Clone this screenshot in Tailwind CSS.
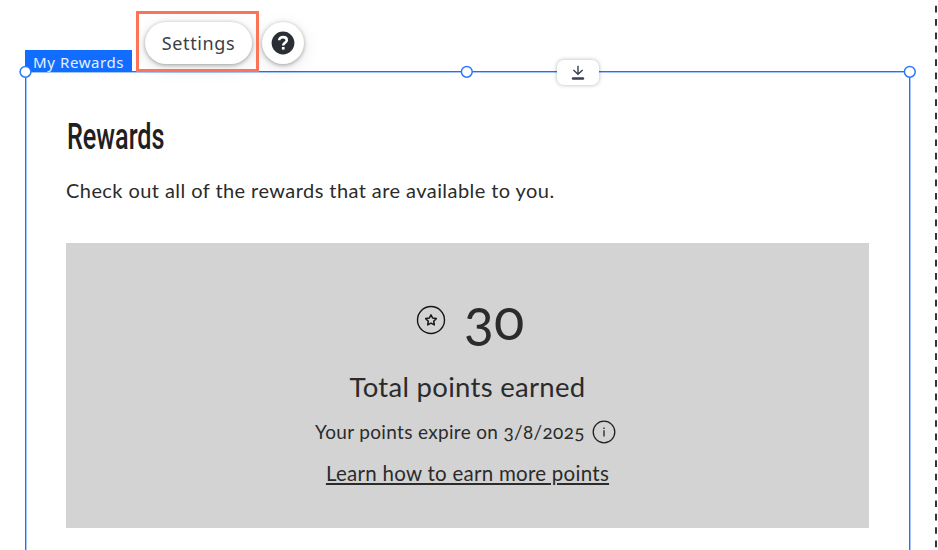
<!DOCTYPE html>
<html lang="en">
<head>
  <meta charset="UTF-8" />
  <meta name="viewport" content="width=device-width,initial-scale=1.0" />
  <title>My Rewards</title>
  <script src="https://cdn.jsdelivr.net/npm/@tailwindcss/browser@4"></script>
</head>
<body class="relative h-[550px] overflow-hidden bg-white font-['Lato','Open_Sans',sans-serif] text-[#2b2b2b]">

  <!-- Rewards widget -->
  <main class="ml-[25px] mt-[71px] h-[500px] w-[885px] border border-b-0 border-[#1f70ff] px-[40px] pt-[44px] shadow-[inset_1px_1px_0_#a5c6ff,1px_0_0_#a5c6ff]">
    <h1 class="ml-px h-[42px] w-fit origin-left scale-x-[0.7] whitespace-nowrap font-['Roboto',sans-serif] text-[36px] font-medium leading-[42px] text-[#202020]">Rewards</h1>
    <p class="mt-[17px] h-[30px] whitespace-nowrap text-[20px] leading-[30px] tracking-[0.43px]">Check out all of the rewards that are available to you.</p>

    <section class="mt-[38px] flex h-[285px] w-[803px] flex-col items-center bg-[#d3d3d3] pt-[46px] whitespace-nowrap">
      <div class="flex h-[64px] items-center gap-[18px] pl-[5px]">
        <svg class="mb-[2px] size-[30px]" viewBox="0 0 30 30" fill="none" stroke="#161616">
          <circle cx="15" cy="15" r="13.5" stroke-width="1.4" />
          <path d="M15 9.8l1.6 3.2 3.7.6-2.6 2.6.6 3.7-3.3-1.7-3.3 1.7.6-3.7-2.6-2.6 3.7-.6z" stroke-width="1.5" stroke-linejoin="round" />
        </svg>
        <span class="mb-[5px] text-[56px] oldstyle-nums leading-[64px]">30</span>
      </div>
      <p class="mt-[14px] h-[40px] text-[27.5px] leading-[40px] tracking-[0.3px]">Total points earned</p>
      <div class="mt-[10px] flex h-[30px] items-center gap-[7px] pr-[4px]">
        <span class="text-[19px] oldstyle-nums leading-[30px] tracking-[0.33px]">Your points expire on 3/8/2025</span>
        <svg class="size-[24px]" viewBox="0 0 24 24" fill="none" stroke="#202020">
          <circle cx="12" cy="12" r="10.8" stroke-width="1.3" />
          <path d="M12 10.2v6.2M12 7.4v1.5" stroke-width="1.3" />
        </svg>
      </div>
      <a href="#" class="mt-[11px] h-[30px] text-[20.5px] leading-[30px] tracking-[0.27px] underline decoration-[1.5px] underline-offset-2">Learn how to earn more points</a>
    </section>
  </main>

  <!-- Selection label and handles -->
  <div class="absolute left-[25px] top-[50px] h-[22px] w-[107px] bg-[#116dff] pl-[8px] font-['Noto_Sans',sans-serif] text-[15px] leading-[24px] tracking-[0.6px] whitespace-nowrap text-white/90">My Rewards</div>
  <svg class="absolute left-[19px] top-[65px] size-[13px]" viewBox="0 0 13 13"><circle cx="6.5" cy="6.8" r="5.4" fill="#fff" stroke="#2b78ff" stroke-width="1.5" /></svg>
  <svg class="absolute left-[460px] top-[65px] size-[13px]" viewBox="0 0 13 13"><circle cx="6.8" cy="6.8" r="5.4" fill="#fff" stroke="#2b78ff" stroke-width="1.5" /></svg>
  <svg class="absolute left-[903px] top-[65px] size-[13px]" viewBox="0 0 13 13"><circle cx="6.8" cy="6.8" r="5.4" fill="#fff" stroke="#2b78ff" stroke-width="1.5" /></svg>

  <!-- Stretch button -->
  <button class="absolute left-[557px] top-[60px] flex h-[25px] w-[42px] items-center justify-center rounded-[7px] bg-white shadow-[0_0_4px_rgba(22,45,61,0.35)]">
    <svg class="size-[16px]" viewBox="0 0 16 16" fill="none" stroke="#3b3d56">
      <path d="M8 .8v8.5M3.4 4.9L8 9.2l4.6-4.3" stroke-width="1.4" />
      <path d="M3 13.5h10" stroke-width="2.4" stroke-linecap="round" />
    </svg>
  </button>

  <!-- Floating toolbar -->
  <button class="absolute left-[145px] top-[22px] h-[42px] w-[107px] rounded-full bg-white font-['Noto_Sans',sans-serif] text-[18px] tracking-[0.6px] text-[#3b3e45] shadow-[0_1px_4px_rgba(0,0,0,0.35),0_4px_18px_rgba(0,0,0,0.1)]">Settings</button>
  <button class="absolute left-[262px] top-[22px] flex size-[42px] items-center justify-center rounded-full bg-white shadow-[0_1px_4px_rgba(0,0,0,0.35),0_4px_18px_rgba(0,0,0,0.1)]">
    <svg class="size-[24px]" viewBox="0 0 24 24" fill="none">
      <circle cx="12" cy="12" r="11.4" fill="#2b2e35" />
      <path d="M8.2 9.3C8.2 7.2 9.8 6.1 12 6.1s3.8 1.2 3.8 3.1c0 2.5-3.6 2.6-3.6 5.2" stroke="#fff" stroke-width="2.6" />
      <path d="M10.9 16h2.7v2.6h-2.7z" fill="#fff" />
    </svg>
  </button>
  <div class="absolute left-[136px] top-[11px] h-[61px] w-[123px] border-3 border-[#fc7358]"></div>

  <!-- Page gridline -->
  <svg class="absolute left-[935px] top-0 h-[550px] w-[2px]" viewBox="0 0 2 550">
    <path d="M1 5.7V550" stroke="#111" stroke-width="1.7" stroke-dasharray="6.7 6.67" />
  </svg>
</body>
</html>
